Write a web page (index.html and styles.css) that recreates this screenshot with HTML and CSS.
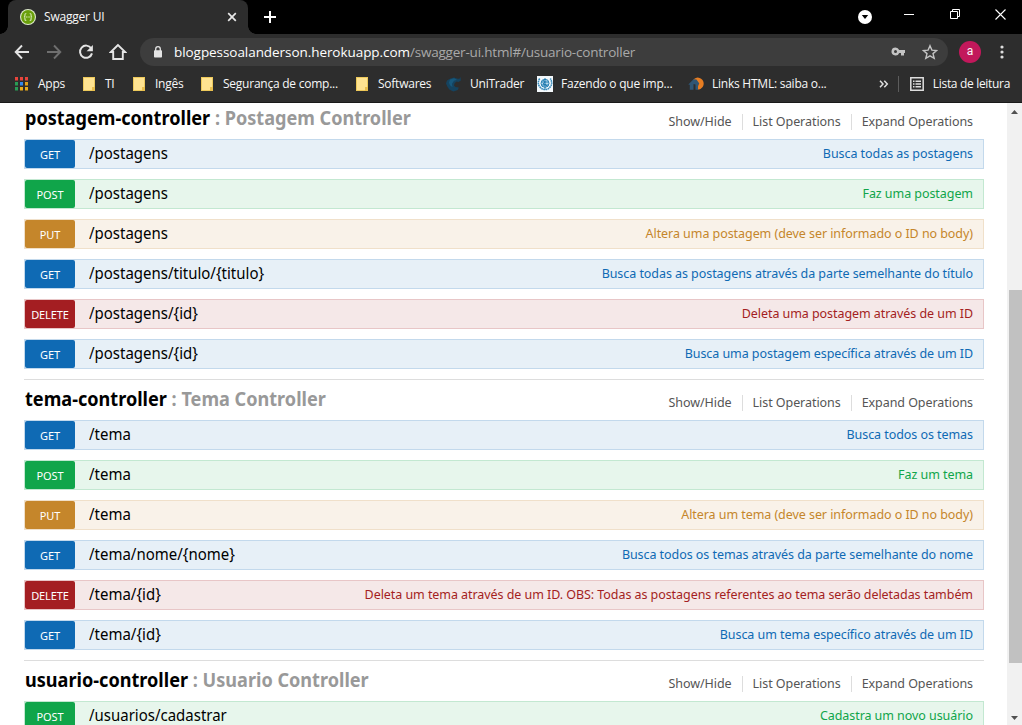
FILE: index.html
```html
<!DOCTYPE html>
<html lang="pt-BR">
<head>
<meta charset="utf-8">
<title>Swagger UI</title>
<link rel="stylesheet" href="styles.css">
</head>
<body>
<div class="browser">
  <header class="titlebar">
    <div class="tab">
      <svg class="favicon" width="16" height="16" viewBox="0 0 16 16"><circle cx="8" cy="8" r="8" fill="#dfeccb"/><circle cx="8" cy="8" r="6.9" fill="#6a9f0c"/><path d="M6.3 4.5q-1.400 0-1.400 1.300v1q0 1.200-1 1.200 1 0 1 1.200v1q0 1.300 1.400 1.300M9.700 4.500q1.400 0 1.400 1.300v1q0 1.200 1 1.200-1 0-1 1.200v1q0 1.300-1.400 1.300" fill="none" stroke="#d5e8b4" stroke-width="1.100"/><path d="M5.800 8h4.600" stroke="#d5e8b4" stroke-width="1.200" stroke-dasharray="1.200 .5"/></svg>
      <span class="tab-title">Swagger UI</span>
      <svg class="tab-close" width="10" height="10" viewBox="0 0 10 10"><path d="M1.200 1.200l7.600 7.600M8.800 1.200l-7.600 7.600" stroke="#e8e8e8" stroke-width="1.700"/></svg>
    </div>
    <svg class="new-tab" width="12" height="12" viewBox="0 0 12 12"><path d="M6 0v12M0 6h12" stroke="#fff" stroke-width="2"/></svg>
    <div class="window-controls">
      <svg class="tab-search" width="14" height="14" viewBox="0 0 14 14"><circle cx="7" cy="7" r="7" fill="#fff"/><path d="M3.800 5h6.400l-3.200 4z" fill="#000"/></svg>
      <svg class="minimize" width="10" height="10" viewBox="0 0 10 10"><path d="M0 5.500h10" stroke="#fff"/></svg>
      <svg class="restore" width="10" height="10" viewBox="0 0 10 10"><path d="M.5 2.500h7v7h-7zM2.500 2.500v-2h7v7h-2" fill="none" stroke="#fff"/></svg>
      <svg class="close" width="11" height="11" viewBox="0 0 11 11"><path d="M.5.500l10 10M10.500.500l-10 10" stroke="#fff" stroke-width="1.100"/></svg>
    </div>
  </header>

  <div class="toolbar">
    <nav class="nav-buttons">
      <svg width="16" height="16" viewBox="0 0 16 16"><path d="M15 8H2M8 1.500L1.700 8 8 14.500" fill="none" stroke="#e4e4e4" stroke-width="1.900"/></svg>
      <svg width="16" height="16" viewBox="0 0 16 16"><path d="M1 8h13M8 1.500L14.300 8 8 14.500" fill="none" stroke="#6f6f6f" stroke-width="1.900"/></svg>
      <svg width="16" height="16" viewBox="0 0 16 16"><path d="M13.200 4.300A6.100 6.100 0 1 0 14 9.400" fill="none" stroke="#e4e4e4" stroke-width="2"/><path d="M14.900 1v6.300H8.600z" fill="#e4e4e4"/></svg>
      <svg width="18" height="18" viewBox="0 0 18 18"><path d="M9 2L1.800 9h2.400v7h9.600V9h2.400z" fill="none" stroke="#e4e4e4" stroke-width="1.900"/></svg>
    </nav>
    <div class="address">
      <svg class="lock" width="10" height="12" viewBox="0 0 10 12"><path d="M2.700 5V3a2.300 2.300 0 0 1 4.600 0v2" fill="none" stroke="#e4e4e4" stroke-width="1.300"/><rect x="1" y="4.300" width="8" height="7.200" rx=".8" fill="#e4e4e4"/></svg>
      <div class="url"><span class="host">blogpessoalanderson.herokuapp.com</span><span class="path-part">/swagger-ui.html#/usuario-controller</span></div>
      <svg class="key" width="15" height="10" viewBox="0 0 15 10"><path d="M4.500.500a4 4 0 1 0 3.700 5.500H10v2.500h3V6h1V3H8.200A4 4 0 0 0 4.500.500zm0 2.500a1.500 1.500 0 1 1 0 3 1.500 1.500 0 0 1 0-3z" fill="#c4c4c4"/></svg>
      <svg class="star" width="16" height="16" viewBox="0 0 16 16"><path d="M8 1.700l1.900 4.400 4.800.4-3.700 3.100 1.200 4.700L8 11.800l-4.200 2.500L5 9.600 1.300 6.500l4.800-.4z" fill="none" stroke="#c4c4c4" stroke-width="1.400"/></svg>
    </div>
    <span class="avatar">a</span>
    <svg class="kebab" width="4" height="14" viewBox="0 0 4 14"><path d="M2 2h0M2 7h0M2 12h0" stroke="#dedede" stroke-width="3.200" stroke-linecap="round"/></svg>
  </div>

  <div class="bookmarks">
    <div class="bookmark bm-apps">
      <svg class="bm-icon" width="16" height="16" viewBox="0 0 16 16"><path d="M1 1h3v3.500H1zM6 1h3v3.500H6zM11 1h3v3.500h-3z" fill="#e8453c"/><path d="M1 6h3v3.500H1z" fill="#299c55"/><path d="M6 6h3v3.500H6z" fill="#3388ee"/><path d="M11 6h3v3.500h-3z" fill="#e2a01a"/><path d="M1 11h3v3.500H1z" fill="#299c55"/><path d="M6 11h3v3.500H6zM11 11h3v3.500h-3z" fill="#e9ac1c"/></svg>
      <span>Apps</span>
    </div>
    <div class="bookmark bm-ti"><i class="folder"></i><span>TI</span></div>
    <div class="bookmark bm-in"><i class="folder"></i><span>Ingês</span></div>
    <div class="bookmark bm-seg"><i class="folder"></i><span>Segurança de comp...</span></div>
    <div class="bookmark bm-soft"><i class="folder"></i><span>Softwares</span></div>
    <div class="bookmark bm-uni">
      <svg class="bm-icon" width="16" height="16" viewBox="0 0 16 16"><path d="M1 4.500L4.500 2.500 8 1.500l3.500 1.300 2 0L14.500 1l.3 3.500-2.300 1.500-1.800-.5-2 1.500-.7 2.500 1.500 1.500 3.300.5-1 2.500-4.500 1.500-4-2-2-3L0 7.500z" fill="#15435f"/><path d="M4 3.500L8 2.300l3 1.500-3 1-2 3 .5 3.500-2.500-2-1-2.500z" fill="#17587c"/></svg>
      <span>UniTrader</span>
    </div>
    <div class="bookmark bm-who">
      <svg class="bm-icon" width="16" height="16" viewBox="0 0 16 16"><path d="M0 0h16v16H0z" fill="#f4f9fc"/><circle cx="8" cy="7.300" r="4" fill="#b5d9ec" stroke="#2983b5"/><path d="M8 2v12M4.500 6h7M4.500 9h7M6 4.500q4 1 0 3.500 4 .5 4 2" fill="none" stroke="#1674aa" stroke-width=".9"/><path d="M2.700 2.500Q0 7 2.500 10.500q2 3 5.500 3 3.500 0 5.500-3Q16 7 13.300 2.500" fill="none" stroke="#3a8dbc" stroke-width="1.600" stroke-dasharray="1.700 .5"/></svg>
      <span>Fazendo o que imp...</span>
    </div>
    <div class="bookmark bm-links">
      <svg class="bm-icon" width="16" height="16" viewBox="0 0 16 16"><path d="M5.300 3.500A6 6 0 1 1 9.500 13.600L10.500 8z" fill="#e77d22"/><path d="M.3 8.600L5.500 3.200l3 .3 2.800 4-1.300 1.500v4.800H7.500V8.500L5.500 8v5.800H1.800V8.800z" fill="#2e5675"/></svg>
      <span>Links HTML: saiba o...</span>
    </div>
    <div class="bookmark-end">
      <svg class="more" width="10" height="8" viewBox="0 0 10 8"><path d="M1 .8L4 4 1 7.200M5.300.8l3 3.200-3 3.200" fill="none" stroke="#dfdfdf" stroke-width="1.500"/></svg>
      <i class="divider"></i>
      <svg class="reading" width="14" height="14" viewBox="0 0 14 14"><path d="M.8.800h12.400v12.400H.8z" fill="none" stroke="#dedede" stroke-width="1.500"/><path d="M3 4.200h1.500M3 7h1.500M3 9.800h1.500M5.500 4.200H11M5.500 7H11M5.500 9.800H11" stroke="#dedede" stroke-width="1.400"/></svg>
      <span>Lista de leitura</span>
    </div>
  </div>

  <div class="viewport">
    <main class="resources">
      <section class="resource">
        <div class="heading"><h2>postagem-controller<span> : Postagem Controller</span></h2><ul class="options"><li>Show/Hide</li><li>List Operations</li><li>Expand Operations</li></ul></div>
        <div class="operation get"><b>GET</b><span class="route">/postagens</span><span class="summary">Busca todas as postagens</span></div>
        <div class="operation post"><b>POST</b><span class="route">/postagens</span><span class="summary">Faz uma postagem</span></div>
        <div class="operation put"><b>PUT</b><span class="route">/postagens</span><span class="summary">Altera uma postagem (deve ser informado o ID no body)</span></div>
        <div class="operation get"><b>GET</b><span class="route">/postagens/titulo/{titulo}</span><span class="summary">Busca todas as postagens através da parte semelhante do título</span></div>
        <div class="operation delete"><b>DELETE</b><span class="route">/postagens/{id}</span><span class="summary">Deleta uma postagem através de um ID</span></div>
        <div class="operation get"><b>GET</b><span class="route">/postagens/{id}</span><span class="summary">Busca uma postagem específica através de um ID</span></div>
      </section>
      <section class="resource">
        <div class="heading"><h2>tema-controller<span> : Tema Controller</span></h2><ul class="options"><li>Show/Hide</li><li>List Operations</li><li>Expand Operations</li></ul></div>
        <div class="operation get"><b>GET</b><span class="route">/tema</span><span class="summary">Busca todos os temas</span></div>
        <div class="operation post"><b>POST</b><span class="route">/tema</span><span class="summary">Faz um tema</span></div>
        <div class="operation put"><b>PUT</b><span class="route">/tema</span><span class="summary">Altera um tema (deve ser informado o ID no body)</span></div>
        <div class="operation get"><b>GET</b><span class="route">/tema/nome/{nome}</span><span class="summary">Busca todos os temas através da parte semelhante do nome</span></div>
        <div class="operation delete"><b>DELETE</b><span class="route">/tema/{id}</span><span class="summary">Deleta um tema através de um ID. OBS: Todas as postagens referentes ao tema serão deletadas também</span></div>
        <div class="operation get"><b>GET</b><span class="route">/tema/{id}</span><span class="summary">Busca um tema específico através de um ID</span></div>
      </section>
      <section class="resource">
        <div class="heading"><h2>usuario-controller<span> : Usuario Controller</span></h2><ul class="options"><li>Show/Hide</li><li>List Operations</li><li>Expand Operations</li></ul></div>
        <div class="operation post"><b>POST</b><span class="route">/usuarios/cadastrar</span><span class="summary">Cadastra um novo usuário</span></div>
      </section>
    </main>
    <div class="scrollbar">
      <svg width="7" height="4" viewBox="0 0 7 4"><path d="M0 4L3.500 0 7 4z" fill="#505050"/></svg>
      <div class="thumb"></div>
      <svg width="7" height="4" viewBox="0 0 7 4"><path d="M0 0L3.500 4 7 0z" fill="#505050"/></svg>
    </div>
  </div>
</div>
</body>
</html>
```
FILE: styles.css
```css
* { box-sizing: border-box; }
body { margin: 0; overflow: hidden; background: #fff; }
svg { display: block; flex: none; }
.browser {
  width: 1022px; height: 725px; overflow: hidden;
  display: flex; flex-direction: column;
  font: 12px/16px "Open Sans", "Noto Sans", sans-serif; color: #f8f8f8;
}
span, h2, li { white-space: nowrap; }

.titlebar { height: 34px; flex: none; display: flex; align-items: flex-start; background: #000; padding-left: 8px; }
.tab { width: 240px; height: 34px; display: flex; align-items: center; padding: 0 11px 0 12px; background: #2d2d2d; border-radius: 8px 8px 0 0; position: relative; }
.tab::before, .tab::after { content: ""; position: absolute; bottom: 0; width: 8px; height: 8px; }
.tab::before { left: -8px; background: radial-gradient(circle at 0 0, #000 7.5px, #2d2d2d 8px); }
.tab::after { right: -8px; background: radial-gradient(circle at 100% 0, #000 7.5px, #2d2d2d 8px); }
.tab-title { margin-left: 8px; letter-spacing: -.2px; flex: 1; }
.new-tab { margin: 11px 0 0 16px; }
.window-controls { margin-left: auto; display: flex; padding: 9px 16px 0 0; }
.tab-search { margin: 1px 32px 0 0; }
.minimize { margin-right: 36px; }
.restore { margin-right: 35px; }

.toolbar { height: 36px; flex: none; display: flex; align-items: center; background: #2d2d2d; padding-left: 14px; }
.nav-buttons { display: flex; align-items: center; gap: 16px; width: 126px; }
.nav-buttons svg:last-child { margin-left: -1px; }
.address { flex: none; width: 808px; height: 28px; border-radius: 14px; margin: 0 11px 0 0; background: #3d3d3d; display: flex; align-items: center; }
.lock { margin-left: 13px; }
.url { display: flex; margin-left: 11px; flex: 1; font-size: 13.5px; line-height: 20px; }
.host { color: #fff; letter-spacing: -.06px; }
.path-part { color: #a9a9a9; letter-spacing: -.2px; }
.key { margin-right: 16px; }
.star { margin-right: 10px; }
.avatar { width: 22px; height: 22px; border-radius: 50%; background: #c2185b; text-align: center; line-height: 21px; font-family: Roboto, sans-serif; font-size: 12px; margin-right: 19px; }

.bookmarks { height: 33px; flex: none; background: #2d2d2d; border-bottom: 1px solid #191919; display: flex; align-items: center; padding: 0 0 4px 14px; }
.bookmark { display: flex; align-items: center; gap: 8px; flex: none; letter-spacing: -.24px; }
.folder { width: 12px; height: 14px; margin: 0 2px; background: #ffe391; border: 1px solid #edc95b; flex: none; position: relative; }
.folder::after { content: ""; position: absolute; right: -1px; bottom: -1px; width: 3px; height: 4px; background: #e9bf4e; }
.bm-apps { width: 67px; }
.bm-ti { width: 50px; }
.bm-in { width: 68px; }
.bm-seg { width: 155px; }
.bm-soft { width: 92px; }
.bm-uni { width: 91px; }
.bm-who { width: 151px; }
.bookmark-end { display: flex; align-items: center; margin-left: auto; letter-spacing: -.32px; padding-right: 12px; }
.more { margin-right: 9px; }
.divider { width: 1px; height: 16px; background: #5c5c5c; }
.reading { margin: 0 9px 0 11px; }

.viewport { height: 622px; flex: none; display: flex; overflow: hidden; background: #fff; }
.resources { width: 960px; margin: -4px 24px 0; flex: none; font-family: "Noto Sans", "Open Sans", sans-serif; }
.resource { border-bottom: 1px solid #ddd; }
.heading { height: 40px; display: flex; justify-content: space-between; align-items: flex-start; padding: 0 11px 0 1px; }
h2 { margin: 6px 0 0; font-size: 19.5px; line-height: 26px; font-weight: 700; color: #000; transform: scaleX(.928); transform-origin: left; }
h2 span { color: #999; }
.options { display: flex; margin: 15px 0 0; padding: 0; list-style: none; font-size: 12.5px; line-height: 16px; letter-spacing: -.06px; color: #555; }
.options li + li { border-left: 1px solid #ddd; margin-left: 10px; padding-left: 10px; }
.operation { height: 30px; display: flex; align-items: center; margin-bottom: 10px; border: 1px solid; padding-right: 10px; }
.operation b { width: 50px; height: 28px; border-radius: 2px; color: #fff; font-weight: 400; font-size: 11px; line-height: 30px; letter-spacing: -.1px; text-align: center; }
.route { font-size: 16px; line-height: 22px; color: #000; margin: -2px 0 0 14px; flex: 1; transform: scaleX(.936); transform-origin: left; }
.summary { font-size: 12.5px; line-height: 18px; letter-spacing: -.06px; }
.get { background: #e7f0f7; border-color: #c3d9ec; color: #0f6ab4; }
.get b { background: #0f6ab4; }
.post { background: #e7f6ec; border-color: #c3e8d1; color: #10a54a; }
.post b { background: #10a54a; }
.put { background: #f9f2e9; border-color: #f0e0ca; color: #c5862b; }
.put b { background: #c5862b; }
.delete { background: #f5e8e8; border-color: #e8c6c7; color: #a41e22; }
.delete b { background: #a41e22; }
.scrollbar { width: 15px; margin-left: -1px; background: #f1f1f1; display: flex; flex-direction: column; align-items: center; padding: 7px 0 5px; flex: none; }
.thumb { width: 13px; height: 373px; margin: 176px 0 auto 2px; background: #c1c1c1; }
```
